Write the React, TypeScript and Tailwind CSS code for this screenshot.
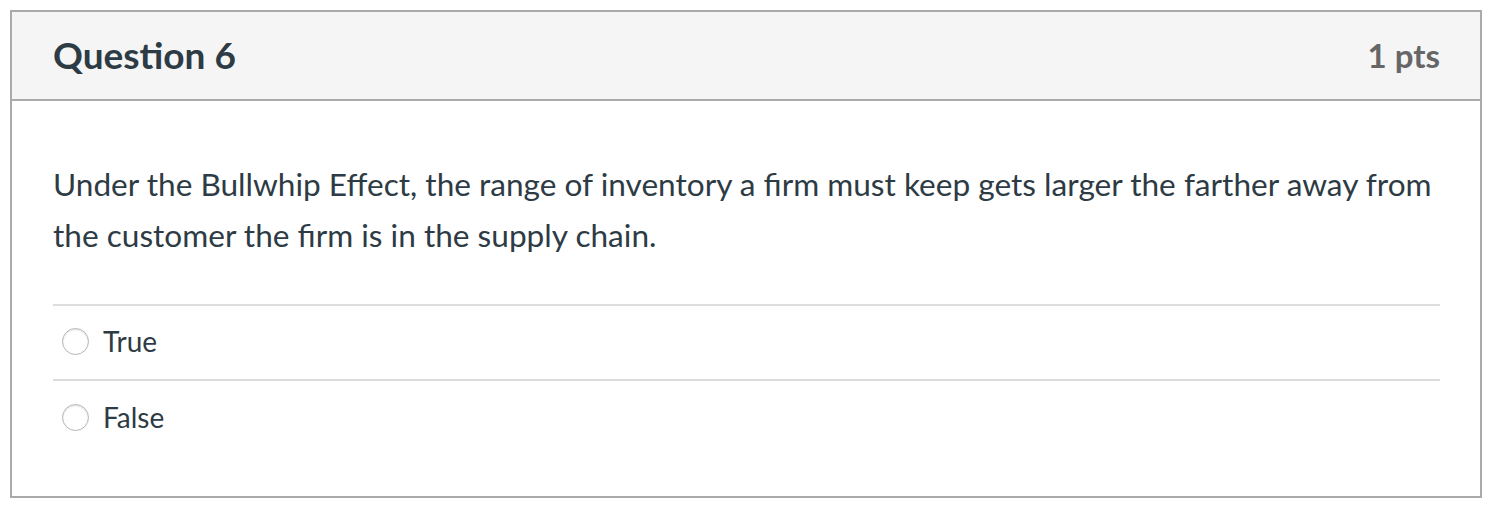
const answers = ["True", "False"];

export default function App() {
  return (
    <div className="w-[1498px] h-[514px] bg-white pt-[10px] pl-[10px] font-['Lato','Liberation_Sans',sans-serif]">
      <div className="w-[1472px] h-[488px] border-2 border-[#aaaaaa] flex flex-col">
        <div className="h-[89px] bg-[#f5f5f5] border-b-2 border-[#aaaaaa] flex items-center justify-between pl-[41px] pr-[40px] shrink-0">
          <h2 className="text-[37px] font-bold text-[#2d3b45] leading-none pb-[2px]">Question 6</h2>
          <span className="text-[33px] font-bold text-[#666666] leading-none">1 pts</span>
        </div>
        <div className="px-[41px] pt-[58px]">
          <p className="text-[31.6px] leading-[51px] text-[#2d3b45]">
            Under the Bullwhip Effect, the range of inventory a firm must keep gets larger the farther away from the customer the firm is in the supply chain.
          </p>
          <div className="mt-[43px] border-t-2 border-[#dddddd] w-[1387px]">
            {answers.map((a, i) => (
              <label
                key={a}
                className={`flex items-center h-[75px] pb-[3px] ${i < answers.length - 1 ? "border-b-2 border-[#dddddd]" : ""}`}
              >
                <span className="ml-[9px] w-[27px] h-[27px] rounded-full border border-[#b5b5b5] bg-white shadow-[inset_0_1px_2px_rgba(0,0,0,0.12)]" />
                <span className="ml-[14px] text-[28px] text-[#2d3b45]">{a}</span>
              </label>
            ))}
          </div>
        </div>
      </div>
    </div>
  );
}
